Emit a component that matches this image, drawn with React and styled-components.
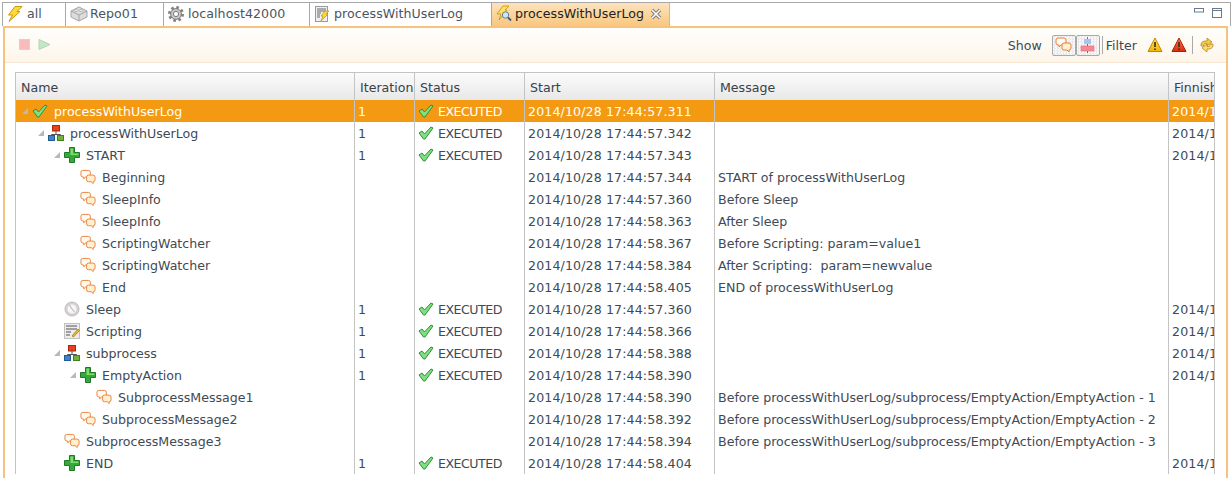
import React from "react";
import styled, { createGlobalStyle } from "styled-components";

const GlobalStyle = createGlobalStyle`
  html, body {
    margin: 0;
    padding: 0;
    height: 478px;
    overflow: hidden;
    background: #fff;
  }
  body {
    font-family: "DejaVu Sans", Verdana, sans-serif;
    font-size: 12.6px;
    color: #3f4a55;
  }
`;

// icons
const Bolt = ({ size = 16 }) => (
  <svg width={size} height={size} viewBox="0 0 16 16">
    <path d="M8 0.5 L15 0.5 L10 5.5 L13 5.5 L2 15.5 L5.5 9 L1.5 9 Z" fill="#ffd83a" stroke="#c79a10" strokeWidth="1" strokeLinejoin="round" />
  </svg>
);

const Brick = () => (
  <svg width="18" height="16" viewBox="0 0 18 16">
    <path d="M1 5 L9 1 L17 5 L17 11 L9 15 L1 11 Z" fill="#dcdcdc" stroke="#a5a5a5" />
    <path d="M1 5 L9 9 L17 5 M9 9 L9 15" fill="none" stroke="#a5a5a5" />
    <ellipse cx="6" cy="4.5" rx="2" ry="1" fill="#f2f2f2" stroke="#a5a5a5" strokeWidth="0.7" />
    <ellipse cx="11" cy="4.5" rx="2" ry="1" fill="#f2f2f2" stroke="#a5a5a5" strokeWidth="0.7" />
  </svg>
);

const Gear = () => (
  <svg width="16" height="16" viewBox="0 0 16 16">
    <circle cx="8" cy="8" r="6.6" fill="none" stroke="#808080" strokeWidth="2.8" strokeDasharray="2.6 2.6" />
    <circle cx="8" cy="8" r="5.4" fill="#c8c8c8" stroke="#7c7c7c" />
    <circle cx="8" cy="8" r="2.6" fill="#fff" stroke="#7c7c7c" />
  </svg>
);

const DocBolt = () => (
  <svg width="16" height="16" viewBox="0 0 16 16">
    <rect x="1.5" y="0.5" width="12" height="15" fill="#f0f0f0" stroke="#9a9a9a" />
    <path d="M3 3 H12 M3 5 H12 M3 7 H7 M3 9 H6 M3 11 H6" stroke="#666" />
    <path d="M11 5 L15 5 L12 8 L14 8 L7 15 L9 10 L7 10 Z" fill="#ffd83a" stroke="#c79a10" strokeWidth="0.8" />
  </svg>
);

const BoltSearch = () => (
  <svg width="16" height="18" viewBox="0 0 16 18">
    <path d="M7 1 L13 1 L9 5 L11 5 L3 15 L5 9 L1 9 Z" fill="#ffe06a" stroke="#c79a10" strokeWidth="0.9" />
    <circle cx="9.5" cy="10" r="3.2" fill="#cfe6f7" stroke="#5d7f9c" />
    <path d="M12 12.5 L15 15.5" stroke="#3d5a78" strokeWidth="1.8" />
  </svg>
);

const CloseIcon = () => (
  <svg width="12" height="12" viewBox="0 0 12 12">
    <path d="M2 2 L10 10 M10 2 L2 10" stroke="#777" strokeWidth="3.4" />
    <path d="M2 2 L10 10 M10 2 L2 10" stroke="#fff" strokeWidth="1.6" />
  </svg>
);

const Check = () => (
  <svg width="16" height="14" viewBox="0 0 16 14">
    <path d="M1 7 L4 5 L6.5 8 L13 1 L15 2 L7 13 L5.5 13 Z" fill="#7fe07f" stroke="#2f8f3c" strokeWidth="1" strokeLinejoin="round" />
  </svg>
);

const Chat = () => (
  <svg width="17" height="16" viewBox="0 0 17 16">
    <path d="M3 1 H9 Q11 1 11 3 V6 Q11 8 9 8 H6 L4 10 V8 H3 Q1 8 1 6 V3 Q1 1 3 1 Z" fill="#fffaf0" stroke="#e8803a" />
    <path d="M9 6 H14 Q16 6 16 8 V11 Q16 13 14 13 V15 L12 13 H9 Q7 13 7 11 V8 Q7 6 9 6 Z" fill="#fff1d0" stroke="#e8803a" />
  </svg>
);

const ProcessTree = () => (
  <svg width="16" height="16" viewBox="0 0 16 16">
    <path d="M8 6 V10 M3.5 12 V9.5 H12.5 V12" fill="none" stroke="#555" />
    <rect x="4.5" y="0.5" width="7" height="5.5" fill="#e8401c" stroke="#a32a10" />
    <rect x="0.5" y="10.5" width="6" height="5" fill="#3d84cf" stroke="#26598f" />
    <rect x="9.5" y="10.5" width="6" height="5" fill="#6fb33a" stroke="#4a7d22" />
  </svg>
);

const Plus = () => (
  <svg width="16" height="16" viewBox="0 0 16 16">
    <path d="M5.5 0.5 H10.5 V5.5 H15.5 V10.5 H10.5 V15.5 H5.5 V10.5 H0.5 V5.5 H5.5 Z" fill="#36a93a" stroke="#1f7a27" />
    <path d="M6.5 1.5 H9 V6.5 H14.5 V8 H6.5 Z" fill="#7fdc6f" />
  </svg>
);

const Clock = () => (
  <svg width="16" height="16" viewBox="0 0 16 16">
    <circle cx="8" cy="8" r="7" fill="#d4d4d4" stroke="#bcbcbc" />
    <circle cx="8" cy="8" r="5" fill="#f6f6f6" stroke="#c8c8c8" strokeWidth="0.6" />
    <path d="M8 8 L5.5 4 M8 8 L10.5 11" stroke="#c9a5a5" />
  </svg>
);

const ScriptIcon = () => (
  <svg width="16" height="16" viewBox="0 0 16 16">
    <rect x="0.5" y="0.5" width="15" height="15" fill="#ececec" stroke="#c0c0c0" />
    <path d="M2 3 H13 M2 6 H13 M2 9 H7 M2 12 H6" stroke="#555" />
    <path d="M8 13 L14 6 L15.5 7.5 L9.5 14 Z" fill="#f2b632" stroke="#a06d10" strokeWidth="0.7" />
  </svg>
);

const StopIcon = () => (
  <svg width="12" height="12" viewBox="0 0 12 12">
    <rect x="0.5" y="0.5" width="10" height="10" fill="#f8bcbc" stroke="#f0c8c8" />
  </svg>
);

const PlayIcon = () => (
  <svg width="14" height="12" viewBox="0 0 14 12">
    <path d="M1 0.5 L12 5.5 L1 10.5 Z" fill="#c4e8c4" stroke="#b4d4b4" />
  </svg>
);

const TreeMini = () => (
  <svg width="15" height="16" viewBox="0 0 15 16">
    <rect x="4" y="2" width="7" height="5" fill="#a9c4f2" />
    <rect x="1" y="9" width="13" height="5" fill="#f58a94" stroke="#e56a75" strokeWidth="0.6" />
    <path d="M7.5 0 V16" stroke="#556" strokeWidth="0.8" strokeDasharray="2 5" />
  </svg>
);

const WarnIcon = ({ top, bottom, edge }) => (
  <svg width="16" height="16" viewBox="0 0 16 16">
    <defs>
      <linearGradient id={`w${top.slice(1)}`} x1="0" y1="0" x2="0" y2="1">
        <stop offset="0" stopColor={top} />
        <stop offset="1" stopColor={bottom} />
      </linearGradient>
    </defs>
    <path d="M8 1 L15 14.5 H1 Z" fill={`url(#w${top.slice(1)})`} stroke={edge} strokeLinejoin="round" />
    <path d="M8 5 V10 M8 11.5 V13" stroke="#3a2a10" strokeWidth="1.6" />
  </svg>
);

const SyncIcon = () => (
  <svg width="16" height="16" viewBox="0 0 16 16">
    <path d="M2 9 Q1.5 4.5 6 4 L8 4 L8 1 L13 5 L8 9 L8 6.5 L6 6.5 Q4.5 7 5 9 Z" fill="#f5c94a" stroke="#b98a1a" strokeWidth="0.8" strokeLinejoin="round" />
    <path d="M14 7 Q14.5 11.5 10 12 L8 12 L8 15 L3 11 L8 7 L8 9.5 L10 9.5 Q11.5 9 11 7 Z" fill="#f9dc7a" stroke="#b98a1a" strokeWidth="0.8" strokeLinejoin="round" />
  </svg>
);

const MinIcon = () => (
  <svg width="10" height="6" viewBox="0 0 10 6">
    <rect x="0.5" y="0.5" width="9" height="3.5" fill="#fff" stroke="#6b7a8a" />
  </svg>
);

const MaxIcon = () => (
  <svg width="10" height="10" viewBox="0 0 10 10">
    <rect x="0.5" y="0.5" width="9" height="9" fill="#fff" stroke="#6b7a8a" />
    <path d="M0.5 2.5 H9.5" stroke="#6b7a8a" />
  </svg>
);

const nodeIcons = {
  chat: <Chat />,
  tree: <ProcessTree />,
  plus: <Plus />,
  clock: <Clock />,
  script: <ScriptIcon />,
  check: <Check />,
};

const tabs = [
  { label: "all", width: 63, gap: 4, icon: <Bolt /> },
  { label: "Repo01", width: 98, gap: 2, icon: <Brick /> },
  { label: "localhost42000", width: 146, gap: 4, icon: <Gear /> },
  { label: "processWithUserLog", width: 182, gap: 4, icon: <DocBolt /> },
];

const rows = [
  { name: "processWithUserLog", depth: 1, icon: "check", open: true, iter: "1", done: true, start: "57.311", finish: true, selected: true },
  { name: "processWithUserLog", depth: 2, icon: "tree", open: true, iter: "1", done: true, start: "57.342", finish: true },
  { name: "START", depth: 3, icon: "plus", open: true, iter: "1", done: true, start: "57.343", finish: true },
  { name: "Beginning", depth: 4, icon: "chat", start: "57.344", message: "START of processWithUserLog" },
  { name: "SleepInfo", depth: 4, icon: "chat", start: "57.360", message: "Before Sleep" },
  { name: "SleepInfo", depth: 4, icon: "chat", start: "58.363", message: "After Sleep" },
  { name: "ScriptingWatcher", depth: 4, icon: "chat", start: "58.367", message: "Before Scripting: param=value1" },
  { name: "ScriptingWatcher", depth: 4, icon: "chat", start: "58.384", message: "After Scripting:  param=newvalue" },
  { name: "End", depth: 4, icon: "chat", start: "58.405", message: "END of processWithUserLog" },
  { name: "Sleep", depth: 3, icon: "clock", iter: "1", done: true, start: "57.360", finish: true },
  { name: "Scripting", depth: 3, icon: "script", iter: "1", done: true, start: "58.366", finish: true },
  { name: "subprocess", depth: 3, icon: "tree", open: true, iter: "1", done: true, start: "58.388", finish: true },
  { name: "EmptyAction", depth: 4, icon: "plus", open: true, iter: "1", done: true, start: "58.390", finish: true },
  { name: "SubprocessMessage1", depth: 5, icon: "chat", start: "58.390", message: "Before processWithUserLog/subprocess/EmptyAction/EmptyAction - 1" },
  { name: "SubprocessMessage2", depth: 4, icon: "chat", start: "58.392", message: "Before processWithUserLog/subprocess/EmptyAction/EmptyAction - 2" },
  { name: "SubprocessMessage3", depth: 3, icon: "chat", start: "58.394", message: "Before processWithUserLog/subprocess/EmptyAction/EmptyAction - 3" },
  { name: "END", depth: 3, icon: "plus", iter: "1", done: true, start: "58.404", finish: true },
];

const App = () => {
  return (
    <Page>
      <GlobalStyle />
      <TabBar>
        {tabs.map((tab) => (
          <Tab key={tab.label} $width={tab.width} $gap={tab.gap}>
            <TabIcon>{tab.icon}</TabIcon>
            {tab.label}
          </Tab>
        ))}
        <ActiveTab>
          <TabIcon><BoltSearch /></TabIcon>
          processWithUserLog
          <CloseBox><CloseIcon /></CloseBox>
        </ActiveTab>
        <TabFill>
          <MinIcon />
          <MaxIcon />
        </TabFill>
      </TabBar>
      <Panel>
        <Toolbar>
          <ToolLeft>
            <StopIcon />
            <PlayIcon />
          </ToolLeft>
          <ToolRight>
            <span>Show</span>
            <ToggleGroup>
              <ToggleButton><Chat /></ToggleButton>
              <ToggleButton><TreeMini /></ToggleButton>
            </ToggleGroup>
            <Divider />
            <FilterLabel>Filter</FilterLabel>
            <WarnSlot $left={10}><WarnIcon top="#ffe766" bottom="#f0b400" edge="#c08a00" /></WarnSlot>
            <WarnSlot $left={8}><WarnIcon top="#ff7a55" bottom="#d92a10" edge="#a82008" /></WarnSlot>
            <SyncDivider />
            <SyncSlot><SyncIcon /></SyncSlot>
          </ToolRight>
        </Toolbar>
        <Grid>
          <HeaderRow>
            <HeadCell>Name</HeadCell>
            <HeadCell>Iteration</HeadCell>
            <HeadCell>Status</HeadCell>
            <HeadCell>Start</HeadCell>
            <HeadCell>Message</HeadCell>
            <HeadCell>Finnished</HeadCell>
          </HeaderRow>
          {rows.map((row, i) => (
            <Row key={i} $selected={row.selected}>
              <NameCell $depth={row.depth}>
                <Arrow $visible={row.open} />
                <NodeIcon>{nodeIcons[row.icon]}</NodeIcon>
                {row.name}
              </NameCell>
              <Cell>{row.iter}</Cell>
              <StatusCell>
                {row.done && <Check />}
                {row.done && "EXECUTED"}
              </StatusCell>
              <DateCell>2014/10/28 17:44:{row.start}</DateCell>
              <Cell>{row.message}</Cell>
              <DateCell>{row.finish && "2014/10/28"}</DateCell>
            </Row>
          ))}
        </Grid>
      </Panel>
    </Page>
  );
};

const columns = "339px 60px 110px 190px 454px 46px";

const Page = styled.div`
  width: 1232px;
  height: 478px;
  padding-top: 2px;
  box-sizing: border-box;
  overflow: hidden;
`;

const TabBar = styled.div`
  display: flex;
  height: 24px;
  margin-left: 2px;
  margin-right: 1px;
  border: 1px solid #a8a8a8;
  border-bottom: none;
  box-sizing: border-box;
`;

const Tab = styled.div`
  display: flex;
  align-items: center;
  gap: ${(p) => p.$gap}px;
  width: ${(p) => p.$width}px;
  flex: none;
  box-sizing: border-box;
  padding-left: 4px;
  padding-bottom: 2px;
  letter-spacing: 0.05px;
  border-right: 1px solid #a8a8a8;
  color: #4a5561;
`;

const ActiveTab = styled(Tab).attrs({ $width: 178, $gap: 3 })`
  background: linear-gradient(#fde3bd, #f9c77f);
  color: #222;
  border-right: 1px solid #e8b46c;
`;

const TabIcon = styled.span`
  display: inline-flex;
  flex: none;
`;

const CloseBox = styled.span`
  display: inline-flex;
  margin-left: 3px;
`;

const TabFill = styled.div`
  flex: 1;
  display: flex;
  justify-content: flex-end;
  align-items: flex-start;
  gap: 8px;
  padding: 5px 8px 0 0;
`;

const Panel = styled.div`
  height: 452px;
  margin-left: 3px;
  margin-right: 4px;
  border: 2px solid #f7c27c;
  border-bottom: none;
  box-sizing: border-box;
  background: #fff;
  overflow: hidden;
`;

const Toolbar = styled.div`
  display: flex;
  align-items: center;
  justify-content: space-between;
  height: 35px;
  padding: 0 11px 0 14px;
  box-sizing: border-box;
  background: linear-gradient(#fffefc, #fdf5ea);
  border-bottom: 1px solid #f6e7d2;
`;

const ToolLeft = styled.div`
  display: flex;
  align-items: center;
  gap: 7px;
`;

const ToolRight = styled.div`
  display: flex;
  align-items: center;
`;

const ToggleGroup = styled.div`
  display: flex;
  margin-left: 10px;
`;

const ToggleButton = styled.div`
  display: flex;
  align-items: center;
  justify-content: center;
  width: 24px;
  height: 21px;
  box-sizing: border-box;
  border: 1px solid #a9a9a9;
  border-radius: 2px;
  background: repeating-conic-gradient(#e9e9e9 0 25%, #fafafa 0 50%) 0 0 / 3px 3px;
`;

const Divider = styled.div`
  width: 1px;
  height: 18px;
  margin-left: 2px;
  background: #a9a9a9;
`;

const FilterLabel = styled.span`
  margin-left: 3px;
`;

const SyncDivider = styled(Divider)`
  margin-left: 5px;
`;

const SyncSlot = styled.span`
  display: inline-flex;
  margin-left: 6px;
`;

const WarnSlot = styled.span`
  display: inline-flex;
  margin-left: ${(p) => p.$left}px;
`;

const Grid = styled.div`
  margin: 9px 0 0 10px;
  width: 1200px;
  border-left: 1px solid #c4c4c4;
  border-right: 1px solid #c4c4c4;
  border-top: 1px solid #c4c4c4;
  box-sizing: border-box;
  overflow: hidden;
`;

const Row = styled.div`
  display: grid;
  grid-template-columns: ${columns};
  height: 22px;
  background: ${(p) => (p.$selected ? "#f39a12" : "#fff")};
  color: ${(p) => (p.$selected ? "#fff" : "#3f4a55")};
`;

const HeaderRow = styled(Row)`
  height: 27px;
  background: linear-gradient(#fbfbfb, #e8e8e8);
  color: #3a4148;
`;

const Cell = styled.div`
  display: flex;
  align-items: center;
  padding-left: 3px;
  white-space: pre;
  overflow: hidden;
  border-right: 1px solid #c4c4c4;
  box-sizing: border-box;
  &:last-child {
    border-right: none;
  }
`;

const HeadCell = styled(Cell)`
  padding-left: 5px;
  padding-top: 2px;
`;

const NameCell = styled(Cell)`
  padding-left: ${(p) => (p.$depth - 1) * 16 + 5}px;
`;

const StatusCell = styled(Cell)`
  gap: 4px;
  padding-left: 3px;
  letter-spacing: -0.5px;
`;

const DateCell = styled(Cell)`
  letter-spacing: 0.12px;
`;

const Arrow = styled.span`
  width: 0;
  height: 0;
  margin-right: 4px;
  margin-left: 1px;
  flex: none;
  border-style: solid;
  border-width: 0 0 6px 6px;
  border-color: transparent transparent ${(p) => (p.$visible ? "#b9b9b9" : "transparent")} transparent;
`;

const NodeIcon = styled.span`
  display: inline-flex;
  width: 16px;
  margin-right: 6px;
  flex: none;
`;

export default App;
